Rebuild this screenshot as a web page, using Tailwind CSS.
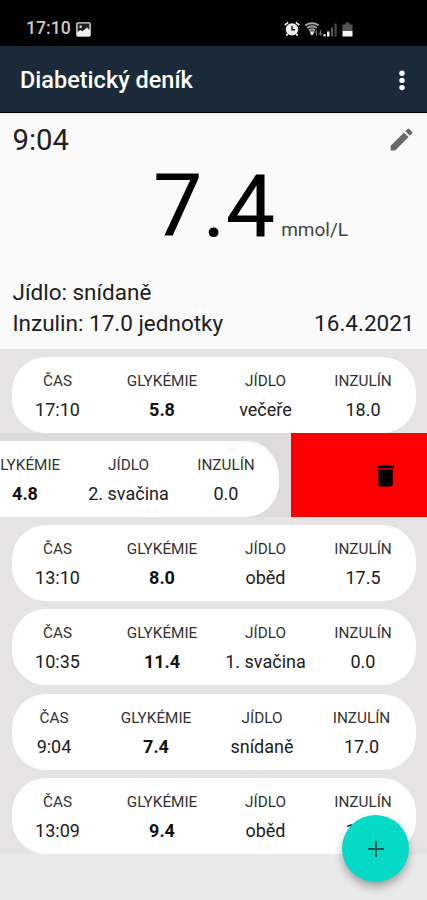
<!DOCTYPE html>
<html lang="cs">
<head>
<meta charset="utf-8">
<meta name="viewport" content="width=device-width, initial-scale=1">
<title>Diabetický deník</title>
<script src="https://cdn.jsdelivr.net/npm/@tailwindcss/browser@4"></script>
</head>
<body class="relative flex h-[900px] w-[427px] flex-col overflow-hidden bg-[#eaeaea] font-['Roboto',sans-serif] text-[#202020]">
<!-- Status bar -->
<div class="flex h-[46px] shrink-0 items-center bg-black pl-[26px] pt-[12px]">
  <span class="w-[50px] text-[17.700px] font-medium leading-none text-[#c8c8c8]">17:10</span>
  <svg class="h-[15px] w-[15px]" viewBox="0 0 15 15"><rect x=".9" y=".9" width="13.2" height="13.2" rx="1" fill="#222" stroke="#e0e0e0" stroke-width="1.4"/><circle cx="4.7" cy="4.8" r="1.3" fill="#ddd"/><path d="M1 10.500l3.300-2.500 2.200 1.300L11 5.500l3 3V14H1z" fill="#eee"/></svg>
  <svg class="ml-[193px] h-[16px] w-[16px]" viewBox="0 0 16 16"><circle cx="8" cy="8.4" r="6.2" fill="#eee"/><path d="M.8 4.2L4.1 1.3M15.2 4.2l-3.3-2.9M3.8 12.8l-1.5 2M12.2 12.8l1.5 2" stroke="#eee" stroke-width="1.7"/><path d="M8 4.7v4.1h3" fill="none" stroke="#111" stroke-width="1.4"/></svg>
  <svg class="ml-[4px] h-[16px] w-[20px]" viewBox="0 0 20 16" fill="none"><path d="M1.200 4.500q6.800-4.500 13.600 0M3.200 7q4.800-3.600 9.600 0M5 9.500q3-2.400 6 0" stroke="#a5a5a5" stroke-width="2"/><path d="M5.700 10.300h4.600L9 14H7z" fill="#ddd"/><path d="M12.500 14.800V10l-1.600 1.800M16.500 9v4.800l-1.700-1.900M16.500 13.800l1.700-1.900" stroke="#686868" stroke-width="1.1"/></svg>
  <svg class="-ml-px h-[15px] w-[14px]" viewBox="0 0 14 15"><path d="M.4 14.500V12h2.400v2.500z" fill="#ccc"/><path d="M4 9.500h2.500v5H4z" fill="#eee"/><path d="M7.900 5.500h2.300v9H7.900z" fill="#555"/><path d="M11.500 1.500h2.200v13h-2.200z" fill="#484848"/></svg>
  <svg class="ml-[5px] h-[15px] w-[11px]" viewBox="0 0 11 15"><path d="M.5 2.500h3V.5h4v2h3V9H.5z" fill="#555"/><path d="M.5 9h10v5.500H.5z" fill="#f5f5f5"/></svg>
</div>
<!-- App bar -->
<header class="flex h-[67px] shrink-0 items-center justify-between border-b border-black bg-[#1b2a38] pl-5 pr-[22px] pt-[4px]">
  <h1 class="text-[23.500px] font-medium leading-none text-white">Diabetický deník</h1>
  <svg class="h-[22px] w-[6px]" viewBox="0 0 6 22" fill="#fff"><circle cx="3" cy="3.200" r="2.700"/><circle cx="3" cy="10.400" r="2.700"/><circle cx="3" cy="17.600" r="2.700"/></svg>
</header>
<!-- Latest reading -->
<section class="flex h-[236px] shrink-0 flex-col border-t-[3px] border-[#f3f3f3] bg-[#fafafa] px-[12.500px]">
  <div class="flex h-[49px] items-center justify-between">
    <span class="text-[29.300px] leading-none">9:04</span>
    <svg class="mr-[-1px] mt-[-2px] h-[29px] w-[29px]" viewBox="0 0 24 24" fill="#696969"><path d="M3 17.250V21h3.750L17.810 9.940l-3.750-3.750L3 17.250zM20.710 7.040a1 1 0 0 0 0-1.410l-2.340-2.340a1 1 0 0 0-1.410 0l-1.830 1.830 3.750 3.750 1.830-1.830z"/></svg>
  </div>
  <div class="flex h-[112px] items-baseline pl-[140.500px] pt-px">
    <span class="text-[88px] leading-[80px] text-black">7.4</span>
    <span class="ml-[6px] text-[19px] text-[#444]">mmol/L</span>
  </div>
  <div class="text-[22.500px] leading-[31px]">Jídlo: snídaně</div>
  <div class="flex justify-between text-[22.500px] leading-[31px]"><span>Inzulin: 17.0 jednotky</span><span>16.4.2021</span></div>
</section>
<!-- Readings list -->
<main id="list" class="flex h-[505px] shrink-0 flex-col bg-[#e5e3e4]"></main>
<!-- Add button -->
<button class="absolute left-[342px] top-[815px] flex h-[67px] w-[67px] items-center justify-center rounded-full bg-[#04dac5] shadow-[0_5px_8px_rgba(0,0,0,0.3)]" aria-label="Přidat">
  <svg class="h-[18px] w-[18px]" viewBox="0 0 18 18"><path d="M9 1v16M1 9h16" stroke="#165c55" stroke-width="2"/></svg>
</button>
<script>
const wide = 'grid-cols-[91px_118px_89px_106px]';
const narrow = 'grid-cols-[84px_120px_92px_107px]';
const rows = [
  ['17:10', '5.8', 'večeře', '18.0', wide],
  ['15:40', '4.8', '2. svačina', '0.0', wide, true],
  ['13:10', '8.0', 'oběd', '17.5', wide],
  ['10:35', '11.4', '1. svačina', '0.0', wide],
  ['9:04', '7.4', 'snídaně', '17.0', narrow],
  ['13:09', '9.4', 'oběd', '17.5', wide]
];
const labels = ['ČAS', 'GLYKÉMIE', 'JÍDLO', 'INZULÍN'];
document.getElementById('list').innerHTML = rows.map(r => {
  const cells = labels.map((l, i) => `<div class="flex flex-col items-center whitespace-nowrap"><span class="text-[15.300px] leading-[18px] text-[#333]">${l}</span><span class="mt-[9px] text-[18px] leading-[22px] ${i === 1 ? 'font-bold text-[#111]' : ''}">${r[i]}</span></div>`).join('');
  const card = `<div class="grid h-[76px] w-[403.500px] shrink-0 rounded-[34px] bg-white pt-[15px] ${r[4]}">${cells}</div>`;
  return r[5]
    ? `<div class="flex h-[84.160px] shrink-0 justify-between overflow-hidden bg-[#dddbdc]"><div class="flex w-[278.500px] justify-end pt-[8px]">${card}</div><div class="flex w-[136px] items-center justify-end bg-[#ff0000] pr-[27px]"><svg class="h-[29px] w-[29px]" viewBox="0 0 24 24"><path d="M6 19c0 1.100.9 2 2 2h8c1.100 0 2-.9 2-2V7H6v12zM19 4h-3.500l-1-1h-5l-1 1H5v2h14V4z"/></svg></div></div>`
    : `<div class="flex h-[84.160px] shrink-0 pl-[12px] pt-[8px]">${card}</div>`;
}).join('');
</script>
</body>
</html>
